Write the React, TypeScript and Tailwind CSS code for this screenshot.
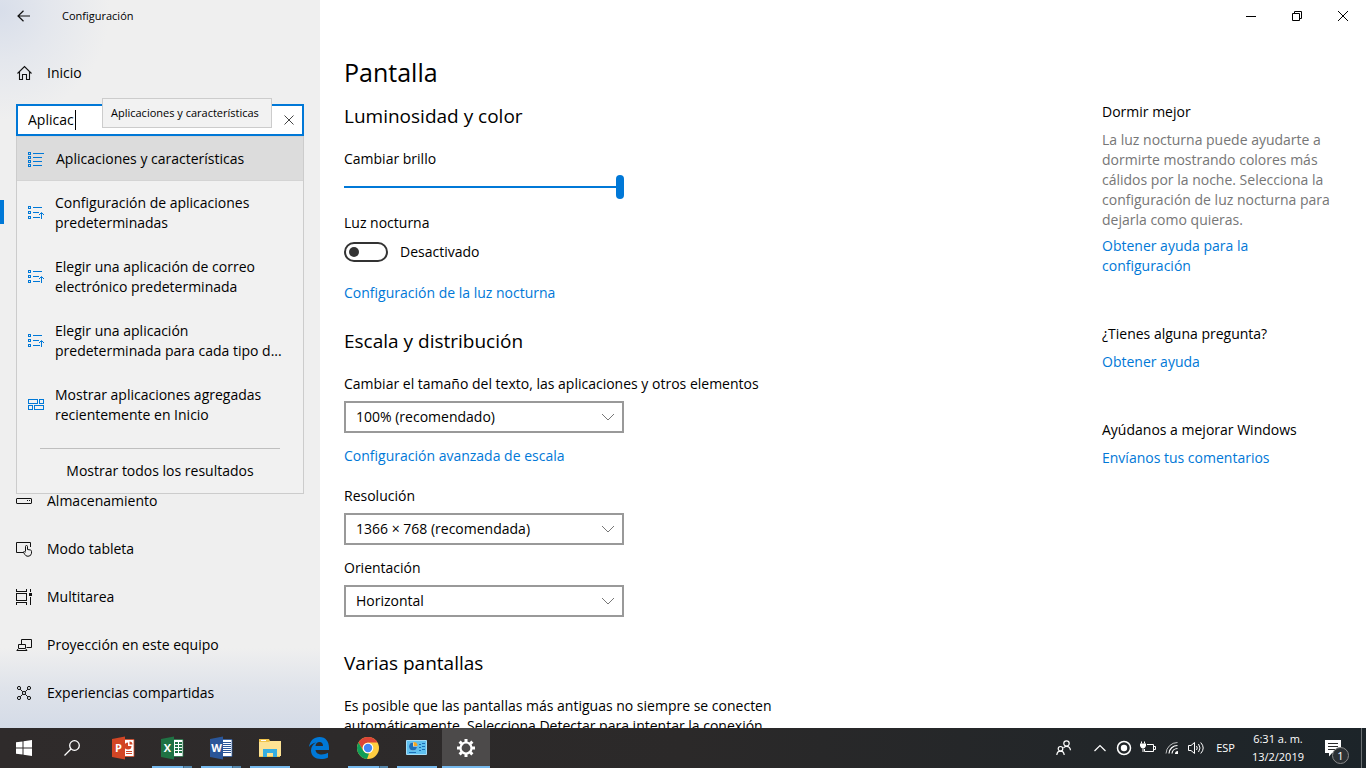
import { useState } from "react";
import type { ReactNode } from "react";

interface SearchResult {
    lines: string[];
    icon: ReactNode;
}

interface TaskbarApp {
    name: string;
    icon: ReactNode;
    state: "closed" | "open" | "stacked" | "active";
}

const ListIcon = () => (
    <svg width="17" height="16" viewBox="0 0 17 16" fill="none" stroke="#0078d7" shapeRendering="crispEdges">
        <path d="M.5 1.5h2v2h-2zM.5 5.5h2v2h-2zM.5 9.5h2v2h-2zM.5 13.5h2v2h-2zM5 2.5h11M5 6.5h9M5 10.5h9M5 14.5h9" />
    </svg>
);

const DefaultsIcon = () => (
    <svg width="17" height="16" viewBox="0 0 17 16" fill="none" stroke="#0078d7">
        <path
            shapeRendering="crispEdges"
            d="M.5 1.5h2v2h-2zM.5 6.5h2v2h-2zM.5 11.5h2v2h-2zM5 2.5h9M5 7.5h6M5 12.5h7M13.5 8v6"
        />
        <path d="M11 10l2.5-2.5L16 10" />
    </svg>
);

const TilesIcon = () => (
    <svg width="17" height="16" viewBox="0 0 17 16" fill="none" stroke="#0078d7" shapeRendering="crispEdges">
        <path d="M.5 2.5h9v4h-9zM11.5 2.5h4v4h-4zM.5 8.5h4v4h-4zM6.5 8.5h9v4h-9z" />
    </svg>
);

const HomeIcon = () => (
    <svg width="16" height="16" viewBox="0 0 16 16" fill="none" stroke="#111" strokeWidth="1.1">
        <path d="M.5 8.5L7.5 1.5l7 7M2.5 7v7.5h3V9.5h4v5h3V7" />
    </svg>
);

const StorageIcon = () => (
    <svg width="16" height="16" viewBox="0 0 16 16" fill="none" stroke="#111">
        <rect x=".5" y="5.5" width="15" height="5" rx=".5" />
        <path d="M11 7.5h1M13 7.5h1" />
    </svg>
);

const TabletIcon = () => (
    <svg width="17" height="16" viewBox="0 0 17 16" fill="none" stroke="#111">
        <path d="M7 11.5H.5v-10h14V6" />
        <path d="M9.500 10.500V5.500a1 1 0 0 1 2 0V8.500l3 .5q1 .3 1 1.300v2q-.5 3-3.500 3-2.300 0-3.300-2L7.300 11q.8-1 2.200.3" />
    </svg>
);

const MultitaskIcon = () => (
    <svg width="16" height="16" viewBox="0 0 16 16" fill="none" stroke="#111" shapeRendering="crispEdges">
        <path d="M.5 4.500h10v7H.5zM.5 0v2.500h10V0M.5 16v-2.500h10V16M14.500 0v3M14.500 8v8" />
        <path d="M13 4h3v3h-3z" fill="#111" stroke="none" />
    </svg>
);

const ProjectIcon = () => (
    <svg width="16" height="16" viewBox="0 0 16 16" fill="none" stroke="#111">
        <path d="M5.500 7V2.500h10v8h-5M2.500 11V7.500h7V11M.8 13.500L2.500 11.500h7l1.500 2z" />
    </svg>
);

const SharedIcon = () => (
    <svg width="16" height="16" viewBox="0 0 16 16" fill="none" stroke="#111">
        <circle cx="3" cy="3" r="1.600" />
        <circle cx="13" cy="3" r="1.600" />
        <circle cx="3" cy="13" r="1.600" />
        <circle cx="13" cy="13" r="1.600" />
        <circle cx="8" cy="8" r="1.600" />
        <path d="M4.200 4.200l2.600 2.600M11.800 4.200L9.200 6.800M4.200 11.800l2.600-2.600M11.800 11.800L9.200 9.200" />
    </svg>
);

const OfficeIcon = ({ letter, color, children }: { letter: string; color: string; children: ReactNode }) => (
    <svg width="24" height="24" viewBox="0 0 24 24">
        <path d="M12 3.500h11v17H12z" fill="#fff" stroke={color} strokeWidth=".8" />
        {children}
        <path d="M1 3l13-2.500v23L1 21z" fill={color} />
        <text x="7.500" y="16" textAnchor="middle" fontFamily="Open Sans, sans-serif" fontWeight="700" fontSize="11" fill="#fff">
            {letter}
        </text>
    </svg>
);

const searchResults: SearchResult[] = [
    { lines: ["Configuración de aplicaciones", "predeterminadas"], icon: <DefaultsIcon /> },
    { lines: ["Elegir una aplicación de correo", "electrónico predeterminada"], icon: <DefaultsIcon /> },
    { lines: ["Elegir una aplicación", "predeterminada para cada tipo d..."], icon: <DefaultsIcon /> },
    { lines: ["Mostrar aplicaciones agregadas", "recientemente en Inicio"], icon: <TilesIcon /> },
];

const navItems = [
    { label: "Almacenamiento", icon: <StorageIcon /> },
    { label: "Modo tableta", icon: <TabletIcon /> },
    { label: "Multitarea", icon: <MultitaskIcon /> },
    { label: "Proyección en este equipo", icon: <ProjectIcon /> },
    { label: "Experiencias compartidas", icon: <SharedIcon /> },
];

const taskbarApps: TaskbarApp[] = [
    {
        name: "PowerPoint",
        state: "closed",
        icon: (
            <OfficeIcon letter="P" color="#d24625">
                <path d="M17 6.500a3.500 3.500 0 1 0 3.500 3.500H17z" fill="#d24625" />
                <path d="M18.500 5.500v3h3a3 3 0 0 0-3-3zM15 15h6v1h-6zM15 17h6v1h-6z" fill="#d24625" />
            </OfficeIcon>
        ),
    },
    {
        name: "Excel",
        state: "stacked",
        icon: (
            <OfficeIcon letter="X" color="#1f7244">
                <path d="M15 6h3v2h-3zM19 6h3v2h-3zM15 9h3v2h-3zM19 9h3v2h-3zM15 12h3v2h-3zM19 12h3v2h-3zM15 15h3v2h-3zM19 15h3v2h-3z" fill="#1f7244" />
            </OfficeIcon>
        ),
    },
    {
        name: "Word",
        state: "stacked",
        icon: (
            <OfficeIcon letter="W" color="#2a5699">
                <path d="M14 6.500h8M14 8.500h8M14 10.500h8M14 12.500h8M14 14.500h8M14 16.500h8" stroke="#2a5699" />
            </OfficeIcon>
        ),
    },
    {
        name: "Explorador de archivos",
        state: "open",
        icon: (
            <svg width="24" height="24" viewBox="0 0 24 24">
                <path d="M1 3h10l1 2h10v16H1z" fill="#f0c44c" />
                <path d="M3 4h5v1H3z" fill="#fff" />
                <path d="M1 6h10l1-1h11v15H1z" fill="#fde293" />
                <path d="M5 21v-8h14v8h-4v-4H9v4z" fill="#35aee2" />
            </svg>
        ),
    },
    {
        name: "Edge",
        state: "closed",
        icon: (
            <svg width="24" height="24" viewBox="0 0 24 24">
                <path
                    d="M2 11C3 4.500 7 1 12.500 1 19 1 22 6 22 11.500V14H8.500c.3 3 3 4.500 6.200 4.500 2.300 0 4.300-.6 6.300-1.700v4.700C19 22.600 16.500 23 14 23 8 23 4 19.500 4 14.500c0-3.700 2-6.500 5.200-8C6.300 7 3.800 8.500 2 11zm6.500-1H16c0-2.500-1.300-4-3.500-4S8.800 7.500 8.500 10z"
                    fill="#0078d7"
                />
            </svg>
        ),
    },
    {
        name: "Chrome",
        state: "stacked",
        icon: (
            <svg width="24" height="24" viewBox="0 0 24 24">
                <circle cx="12" cy="12" r="11" fill="#ffcd40" />
                <path d="M12 1A11 11 0 0 1 21.500 6.500H12a5.500 5.500 0 0 0-4.800 8.300L2.500 6.500A11 11 0 0 1 12 1z" fill="#db4437" />
                <path d="M2.500 6.500l4.700 8.300A5.500 5.500 0 0 0 13 17.400L11 23A11 11 0 0 1 2.500 6.500z" fill="#0f9d58" />
                <circle cx="12" cy="12" r="5.300" fill="#fff" />
                <circle cx="12" cy="12" r="4.200" fill="#4285f4" />
            </svg>
        ),
    },
    {
        name: "Panel de control",
        state: "open",
        icon: (
            <svg width="24" height="24" viewBox="0 0 24 24">
                <path d="M1.500 4.500h20v14h-20z" fill="#5fc0ef" stroke="#a5dcf7" />
                <circle cx="8" cy="10.500" r="4" fill="#fff" />
                <path d="M8 10.500V6.500a4 4 0 1 0 4 4z" fill="#1d6fb8" />
                <path d="M8.500 10V6a4 4 0 0 1 4 4z" fill="#f5a623" />
                <path d="M14 8.500h2M17 7.500h3M14 11.500h2M17 10.500h3M14 14.500h2M17 13.500h3M4 16.500h7" stroke="#1d6fb8" />
            </svg>
        ),
    },
    {
        name: "Configuración",
        state: "active",
        icon: (
            <svg width="24" height="24" viewBox="0 0 24 24" fill="none" stroke="#fff">
                <circle cx="12" cy="12" r="5.500" strokeWidth="2.200" />
                <path
                    d="M12 3v3M12 18v3M3 12h3M18 12h3M5.600 5.600l2.200 2.200M16.200 16.200l2.200 2.200M5.600 18.400l2.200-2.200M16.200 7.800l2.200-2.200"
                    strokeWidth="3"
                />
            </svg>
        ),
    },
];

function SelectBox({ id, label, value }: { id: string; label: string; value: string }) {
    return (
        <div>
            <label htmlFor={id} className="block leading-5">
                {label}
            </label>
            <div className="relative mt-[7px] w-[280px]">
                <select
                    id={id}
                    className="block h-8 w-full appearance-none border-2 border-[#999] bg-white px-[10px] text-sm text-black outline-none"
                >
                    <option>{value}</option>
                </select>
                <svg className="pointer-events-none absolute top-[11px] right-[9px]" width="14" height="10" viewBox="0 0 14 10" fill="none" stroke="#777">
                    <path d="M1 2l6 6 6-6" />
                </svg>
            </div>
        </div>
    );
}

function Link({ children }: { children: ReactNode }) {
    return (
        <a href="#" className="block leading-5 text-[#0078d7]">
            {children}
        </a>
    );
}

function Sidebar() {
    const [query, setQuery] = useState("Aplicac");

    return (
        <aside className="relative w-80 shrink-0 bg-[#efefef] bg-[radial-gradient(circle_at_0px_10px,#d8deea_0px,#e4e7ed_50px,transparent_110px),linear-gradient(to_top,#d4dbe7_0px,#dfe3ea_40px,transparent_80px)]">
            <header className="flex h-8 items-center">
                <button aria-label="Atrás" className="flex w-12 justify-center">
                    <svg width="14" height="12" viewBox="0 0 14 12" fill="none" stroke="#111" strokeWidth="1.200">
                        <path d="M13 6H1M6.500.7L1 6l5.500 5.300" />
                    </svg>
                </button>
                <span className="ml-[14px] text-[11px]">Configuración</span>
            </header>

            <a href="#" className="mt-4 flex h-12 items-center gap-[14px] pt-px pl-[17px]">
                <HomeIcon />
                Inicio
            </a>

            <div className="relative z-10 mx-4 mt-2">
                <div className="flex h-8 items-center border-2 border-[#0078d7] bg-white">
                    <div className="relative h-full min-w-0 flex-1">
                        <input
                            aria-label="Buscar una configuración"
                            value={query}
                            onChange={(e) => setQuery(e.target.value)}
                            className="block h-full w-full bg-transparent pb-px pl-[10px] caret-black outline-none"
                        />
                        {query === "Aplicac" && <span className="pointer-events-none absolute top-1 left-[57px] h-5 w-px bg-black" />}
                    </div>
                    <button aria-label="Borrar" onClick={() => setQuery("")} className="flex w-[26px] justify-center">
                        <svg width="10" height="10" viewBox="0 0 10 10" stroke="#444">
                            <path d="M.5.5l9 9M9.500.5l-9 9" />
                        </svg>
                    </button>
                </div>

                <div role="tooltip" className="absolute -top-[6px] left-[86px] flex h-[30px] items-center border border-[#ccc] bg-[#f2f2f2] pr-3 pl-2 text-[11px] whitespace-nowrap">
                    Aplicaciones y características
                </div>

                <div className="absolute top-8 right-0 left-0 border border-t-0 border-[#ccc] bg-[#f1f1f1]">
                    <button className="flex h-[45px] w-full items-center gap-[11px] border-y border-[#d4d4d4] bg-[#dcdcdc] pl-[11px] text-left">
                        <ListIcon />
                        Aplicaciones y características
                    </button>
                    {searchResults.map((result) => (
                        <button key={result.lines[0]} className="flex h-16 w-full items-center gap-[10px] pl-[11px] text-left leading-5 whitespace-nowrap">
                            {result.icon}
                            <span>
                                {result.lines[0]}
                                <br />
                                {result.lines[1]}
                            </span>
                        </button>
                    ))}
                    <div className="mx-[23px] mt-[11px] border-t border-[#bfbfbf]" />
                    <button className="h-11 w-full">Mostrar todos los resultados</button>
                </div>
            </div>

            {/* the search results cover the first rows of the list */}
            <nav className="pt-[52px]">
                <div className="flex h-12 items-center">
                    <div className="h-6 w-1 bg-[#0078d7]" />
                </div>
                <ul className="mt-60">
                    {navItems.map((item) => (
                        <li key={item.label}>
                            <a href="#" className="flex h-12 items-center pt-px pl-4">
                                <span className="w-[31px]">{item.icon}</span>
                                {item.label}
                            </a>
                        </li>
                    ))}
                </ul>
            </nav>
        </aside>
    );
}

function WindowButtons() {
    return (
        <div className="flex h-8 justify-end">
            <button aria-label="Minimizar" className="flex w-[46px] items-center justify-center">
                <svg width="10" height="10" viewBox="0 0 10 10" stroke="#000">
                    <path d="M0 5.500h10" />
                </svg>
            </button>
            <button aria-label="Restaurar" className="flex w-[46px] items-center justify-center">
                <svg width="10" height="10" viewBox="0 0 10 10" fill="none" stroke="#000">
                    <path d="M.5 2.500h7v7h-7zM2.500 2.500v-2h7v7h-2" />
                </svg>
            </button>
            <button aria-label="Cerrar" className="flex w-[46px] items-center justify-center">
                <svg width="10" height="10" viewBox="0 0 10 10" stroke="#000">
                    <path d="M0 0l10 10M10 0L0 10" />
                </svg>
            </button>
        </div>
    );
}

function DisplaySettings() {
    const [brightness, setBrightness] = useState(100);
    const [nightLight, setNightLight] = useState(false);

    return (
        <section className="w-[440px]">
            <h1 className="text-[25px] leading-9">Pantalla</h1>

            <h2 className="mt-3 text-[19px] leading-7">Luminosidad y color</h2>
            <label htmlFor="brightness" className="mt-[19px] block leading-5">
                Cambiar brillo
            </label>
            <input
                id="brightness"
                type="range"
                value={brightness}
                onChange={(e) => setBrightness(Number(e.target.value))}
                className="mt-[6px] block h-6 w-[280px] appearance-none bg-transparent [&::-webkit-slider-runnable-track]:h-[2px] [&::-webkit-slider-runnable-track]:bg-[#0078d7] [&::-webkit-slider-thumb]:-mt-[11px] [&::-webkit-slider-thumb]:h-6 [&::-webkit-slider-thumb]:w-2 [&::-webkit-slider-thumb]:appearance-none [&::-webkit-slider-thumb]:rounded-full [&::-webkit-slider-thumb]:bg-[#0078d7]"
            />

            <label htmlFor="night-light" className="mt-[14px] block leading-5">
                Luz nocturna
            </label>
            <div className="mt-[9px] flex h-5 items-center gap-3">
                <input
                    id="night-light"
                    type="checkbox"
                    role="switch"
                    checked={nightLight}
                    onChange={(e) => setNightLight(e.target.checked)}
                    className="flex h-5 w-11 appearance-none items-center rounded-full border-2 border-[#333] px-[3px] before:size-[10px] before:rounded-full before:bg-[#333] checked:justify-end"
                />
                <span>{nightLight ? "Activado" : "Desactivado"}</span>
            </div>
            <div className="mt-[21px]">
                <Link>Configuración de la luz nocturna</Link>
            </div>

            <h2 className="mt-6 text-[19px] leading-7">Escala y distribución</h2>
            <div className="mt-[19px]">
                <SelectBox id="scale" label="Cambiar el tamaño del texto, las aplicaciones y otros elementos" value="100% (recomendado)" />
            </div>
            <div className="mt-[13px]">
                <Link>Configuración avanzada de escala</Link>
            </div>
            <div className="mt-5 space-y-[13px]">
                <SelectBox id="resolution" label="Resolución" value="1366 × 768 (recomendada)" />
                <SelectBox id="orientation" label="Orientación" value="Horizontal" />
            </div>

            <h2 className="mt-8 text-[19px] leading-7">Varias pantallas</h2>
            <p className="mt-[19px] leading-5">
                Es posible que las pantallas más antiguas no siempre se conecten automáticamente. Selecciona Detectar para intentar la conexión
            </p>
        </section>
    );
}

function HelpPanel() {
    return (
        <aside className="mt-12 w-60 shrink-0">
            <h3 className="leading-5">Dormir mejor</h3>
            <p className="mt-2 leading-5 text-[#767676]">
                La luz nocturna puede ayudarte a dormirte mostrando colores más cálidos por la noche. Selecciona la configuración de luz nocturna para dejarla como quieras.
            </p>
            <div className="mt-[6px] w-40">
                <Link>Obtener ayuda para la configuración</Link>
            </div>

            <h3 className="mt-12 leading-5">¿Tienes alguna pregunta?</h3>
            <div className="mt-2">
                <Link>Obtener ayuda</Link>
            </div>

            <h3 className="mt-12 leading-5">Ayúdanos a mejorar Windows</h3>
            <div className="mt-2">
                <Link>Envíanos tus comentarios</Link>
            </div>
        </aside>
    );
}

function Underline({ state }: { state: TaskbarApp["state"] }) {
    if (state === "closed") return null;
    if (state === "active") return <span className="absolute inset-x-0 bottom-0 h-[2px] bg-[#76b9ed]" />;
    return (
        <span className="absolute inset-x-1 bottom-0 flex h-[2px]">
            <span className="flex-1 bg-[#76b9ed]" />
            {state === "stacked" && <span className="w-[9px] border-l border-[#3f6684] bg-[#5587ac]" />}
        </span>
    );
}

function Taskbar() {
    return (
        <footer className="flex h-10 shrink-0 bg-gradient-to-r from-[#2f2b2b] via-[#2b2929] to-[#1c2429] text-white">
            <button aria-label="Inicio" className="flex w-12 items-center justify-center">
                <svg width="16" height="16" viewBox="0 0 16 16" fill="#fff">
                    <path d="M0 2.300L6.500 1.400v6.100H0zM7.500 1.200L16 0v7.500H7.500zM0 8.500h6.500v6.100L0 13.700zM7.500 8.500H16V16l-8.500-1.200z" />
                </svg>
            </button>
            <button aria-label="Buscar" className="flex w-12 items-center justify-center">
                <svg width="16" height="16" viewBox="0 0 16 16" fill="none" stroke="#fff" strokeWidth="1.300">
                    <circle cx="10.500" cy="5.500" r="4.800" />
                    <path d="M7 9L.5 15.500" />
                </svg>
            </button>

            <div className="ml-[3px] flex gap-px">
                {taskbarApps.map((app) => (
                    <button
                        key={app.name}
                        aria-label={app.name}
                        className={`relative flex w-12 items-center justify-center ${app.state === "active" ? "bg-[#4c4a4a]" : ""}`}
                    >
                        {app.icon}
                        <Underline state={app.state} />
                    </button>
                ))}
            </div>

            <div className="ml-auto flex items-center">
                <button aria-label="Contactos" className="mr-5">
                    <svg width="16" height="16" viewBox="0 0 16 16" fill="none" stroke="#fff" strokeWidth="1.200">
                        <circle cx="10.500" cy="3.500" r="2.700" />
                        <path d="M7.500 7.800c.8-1 1.800-1.500 3-1.500 2 0 3.700 1.500 4 4" />
                        <circle cx="4.500" cy="8.800" r="2.300" />
                        <path d="M.8 15c.2-2.300 1.700-3.900 3.700-3.900S8 12.700 8.200 15" />
                    </svg>
                </button>
                <div className="flex items-center gap-2">
                    <button aria-label="Mostrar iconos ocultos">
                        <svg width="16" height="16" viewBox="0 0 16 16" fill="none" stroke="#fff" strokeWidth="1.200">
                            <path d="M2.500 11L8 5.500l5.500 5.500" />
                        </svg>
                    </button>
                    <button aria-label="Grabación">
                        <svg width="16" height="16" viewBox="0 0 16 16" fill="none" stroke="#fff" strokeWidth="1.500">
                            <circle cx="8" cy="8" r="6.500" />
                            <circle cx="8" cy="8" r="3.200" fill="#fff" stroke="none" />
                        </svg>
                    </button>
                    <button aria-label="Batería">
                        <svg width="16" height="16" viewBox="0 0 16 16" fill="none" stroke="#fff">
                            <path d="M7 4.500h6.500v7H4.500v-2.500M14 6.500h1.500v3H14M1.500 1.500v2M4.500 1.500v2M3 8.500v3.500" />
                            <path d="M0 3.500h6v2.500Q5 8.500 3 8.500T0 6z" fill="#fff" stroke="none" />
                        </svg>
                    </button>
                    <button aria-label="Red">
                        <svg width="16" height="16" viewBox="0 0 16 16" fill="none" stroke="#fff">
                            <path d="M2 13.500A11.500 11.500 0 0 1 13.500 2.500" opacity=".7" />
                            <path d="M5 13.500A8.500 8.500 0 0 1 13.500 5.500M8 13.500A5.500 5.500 0 0 1 13.500 8.500" strokeWidth="1.200" />
                            <path d="M11 14a3 3 0 0 1 3-3v3z" fill="#fff" stroke="none" />
                        </svg>
                    </button>
                    <button aria-label="Volumen">
                        <svg width="17" height="16" viewBox="0 0 17 16" fill="none" stroke="#fff">
                            <path d="M.5 5.500h2.500l3.500-3v11L3 10.500H.5zM8.500 6q1.500 2 0 4M10.500 4q3 4 0 8M12.700 2.500q5 5.500 0 11" />
                        </svg>
                    </button>
                </div>
                <span className="ml-[11px] text-[11px]">ESP</span>
                <div className="ml-[17px] text-center text-[11px] leading-[18px]">
                    <div>6:31 a. m.</div>
                    <div>13/2/2019</div>
                </div>
                <button aria-label="Notificaciones" className="relative ml-[21px] h-10 w-[26px]">
                    <svg className="absolute top-3 left-0" width="17" height="17" viewBox="0 0 17 17">
                        <path d="M0 0h16v13H7l-3 3.500V13H0z" fill="#fff" />
                        <path d="M3 3.500h10M3 6.500h10M3 9.500h7" stroke="#2a2a2a" />
                    </svg>
                    <span className="absolute top-[19px] left-[7px] flex size-[17px] items-center justify-center rounded-full border border-[#8a8a8a] bg-[#2c3135] text-[11px]">
                        1
                    </span>
                </button>
                <div className="mr-1 ml-[10px] h-10 w-px bg-[#6b7073]" />
            </div>
        </footer>
    );
}

export default function App() {
    return (
        <div className="flex h-screen flex-col overflow-hidden bg-white font-['Open_Sans','Noto_Sans',sans-serif] text-sm text-black">
            <div className="flex min-h-0 flex-1 overflow-hidden">
                <Sidebar />
                <main className="min-w-0 flex-1">
                    <WindowButtons />
                    <div className="flex justify-between pt-[22px] pr-6 pl-6">
                        <DisplaySettings />
                        <HelpPanel />
                    </div>
                </main>
            </div>
            <Taskbar />
        </div>
    );
}
